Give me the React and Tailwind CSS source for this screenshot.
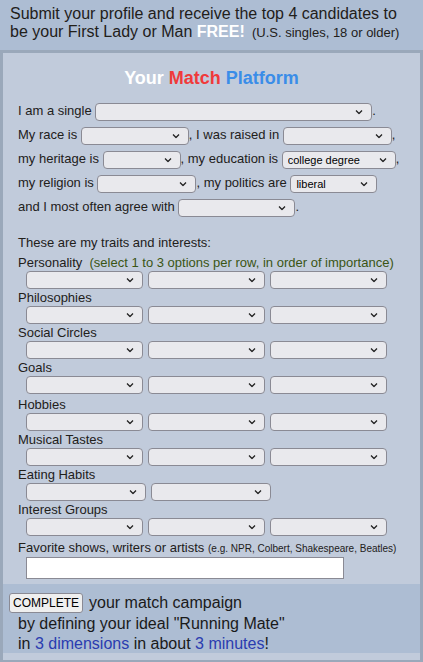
import React from 'react';

const grid3 = ['Personality', 'Philosophies', 'Social Circles', 'Goals', 'Hobbies', 'Musical Tastes'];

function Chevron() {
  return (
    <svg width="8" height="5" viewBox="0 0 8 5" className="pointer-events-none absolute right-[9px] top-1/2 -translate-y-1/2">
      <path d="M1 1l3 3 3-3" fill="none" stroke="#222" strokeWidth="1.3" />
    </svg>
  );
}

function Select({ w, value = '' }) {
  return (
    <span className={`relative inline-block align-middle ${w}`}>
      <select
        defaultValue={value}
        className="block h-[18px] w-full appearance-none rounded-[4px] border border-[#8a8a94] bg-[#e9e9ed] pl-[5px] pr-5 text-[11px] leading-[16px] text-black outline-none"
      >
        <option value="">{value}</option>
      </select>
      <Chevron />
    </span>
  );
}

function Row3({ label, note, two, extra }) {
  return (
    <div className={extra ? 'mt-[2px]' : ''}>
      <div className="h-[17px] leading-[17px] whitespace-nowrap">
        {label}
        {note && <span className="text-[#3a5514]">&nbsp; (select 1 to 3 options per row, in order of importance)</span>}
      </div>
      <div className="flex gap-[5px] pl-[8px]">
        {two ? (
          <>
            <Select w="w-[120px]" />
            <Select w="w-[120px]" />
          </>
        ) : (
          <>
            <Select w="w-[117px]" />
            <Select w="w-[117px]" />
            <Select w="w-[117px]" />
          </>
        )}
      </div>
    </div>
  );
}

export default function App() {
  return (
    <div className="w-[423px] bg-[#adbdd3] font-['Liberation_Sans',Arial,sans-serif] text-[#22201a]">
      <header className="px-[10px] pt-[5px] pb-[8px] text-[16px] leading-[18px]">
        <div>Submit your profile and receive the top 4 candidates to</div>
        <div>
          be your First Lady or Man <b className="text-white">FREE!</b>
          <span className="text-[13px]">&nbsp; (U.S. singles, 18 or older)</span>
        </div>
      </header>
      <div className="border-[3px] border-[#9aa8ba] bg-[#c1cbdb] pb-[7px]">
        <h1 className="pt-[15px] pb-[13px] text-center text-[18px] font-bold leading-[20px]">
          <span className="text-white">Your </span>
          <span className="text-[#f03a3a]">Match </span>
          <span className="text-[#3a8de8]">Platform</span>
        </h1>
        <div className="px-[15px] text-[13px]">
          <div className="flex flex-col gap-[4.5px] leading-[19px] whitespace-nowrap">
            <div>
              I am a single <Select w="w-[277px]" />.
            </div>
            <div>
              My race is <Select w="w-[108px]" />, I was raised in <Select w="w-[109px]" />,
            </div>
            <div>
              my heritage is <Select w="w-[78px]" />, my education is <Select w="w-[114px]" value="college degree" />,
            </div>
            <div>
              my religion is <Select w="w-[99px]" />, my politics are <Select w="w-[87px]" value="liberal" />
            </div>
            <div>
              and I most often agree with <Select w="w-[117px]" />.
            </div>
          </div>
          <div className="mt-[17px] leading-[17px]">These are my traits and interests:</div>
          <div className="mt-[3px] flex flex-col">
            {grid3.map((g, i) => (
              <Row3 key={g} label={g} note={i === 0} extra={g === 'Hobbies'} />
            ))}
            <Row3 label="Eating Habits" two />
            <Row3 label="Interest Groups" />
          </div>
          <div className="mt-[4px] leading-[16px] whitespace-nowrap">
            Favorite shows, writers or artists{' '}
            <span className="text-[10px]">(e.g. NPR, Colbert, Shakespeare, Beatles)</span>
          </div>
          <div className="pl-[8px]">
            <input type="text" className="block h-[22px] w-[318px] border border-[#8a8a94] bg-white" />
          </div>
        </div>
        <div className="mt-[5px] bg-[#adbdd3] px-[6px] pt-[8px] text-[16px] leading-[19px] text-[#1a1a1a]">
          <div className="flex h-[22px] items-center">
            <button className="mr-[6px] h-[20px] rounded-[3px] border border-[#8a8a94] bg-[#efefef] px-[3px] text-[12px] leading-[18px] text-black">
              COMPLETE
            </button>
            your match campaign
          </div>
          <div className="pl-[9px] leading-[20px]">by defining your ideal "Running Mate"</div>
          <div className="pl-[9px]">
            in <span className="text-[#2a3cb0]">3 dimensions</span> in about{' '}
            <span className="text-[#2a3cb0]">3 minutes</span>!
          </div>
        </div>
      </div>
    </div>
  );
}
